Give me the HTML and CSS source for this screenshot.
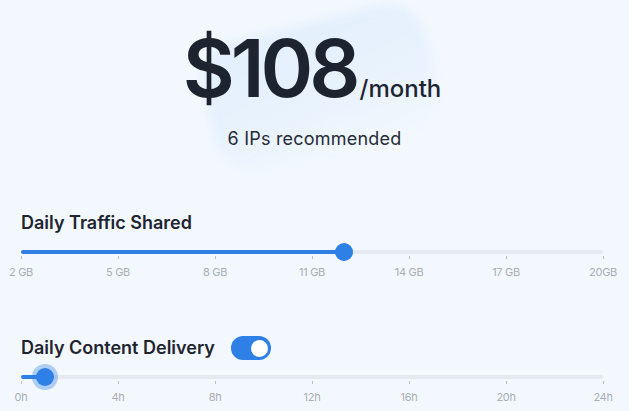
FILE: index.html
```html
<!DOCTYPE html>
<html lang="en">
<head>
<meta charset="utf-8">
<title>Pricing</title>
<link rel="stylesheet" href="styles.css">
</head>
<body>
<main class="page">
  <section class="price">
    <div class="blob" aria-hidden="true"></div>
    <div class="price-line">
      <span class="amount">$108</span><span class="period">/month</span>
    </div>
    <p class="subtitle">6 IPs recommended</p>
  </section>

  <section class="control traffic">
    <div class="control-head">
      <h2 class="control-title">Daily Traffic Shared</h2>
    </div>
    <div class="slider">
      <div class="fill" style="width: 55.56%"></div>
      <div class="thumb" style="left: 55.56%"></div>
    </div>
    <div class="scale">
      <div class="mark"><span class="tick"></span><span class="label">2 GB</span></div>
      <div class="mark"><span class="tick"></span><span class="label">5 GB</span></div>
      <div class="mark"><span class="tick"></span><span class="label">8 GB</span></div>
      <div class="mark"><span class="tick"></span><span class="label">11 GB</span></div>
      <div class="mark"><span class="tick"></span><span class="label">14 GB</span></div>
      <div class="mark"><span class="tick"></span><span class="label">17 GB</span></div>
      <div class="mark"><span class="tick"></span><span class="label">20GB</span></div>
    </div>
  </section>

  <section class="control delivery">
    <div class="control-head">
      <h2 class="control-title">Daily Content Delivery</h2>
      <span class="toggle on" role="switch" aria-checked="true"><span class="knob"></span></span>
    </div>
    <div class="slider">
      <div class="fill" style="width: 4.17%"></div>
      <div class="thumb halo" style="left: 4.17%"></div>
    </div>
    <div class="scale">
      <div class="mark"><span class="tick"></span><span class="label">0h</span></div>
      <div class="mark"><span class="tick"></span><span class="label">4h</span></div>
      <div class="mark"><span class="tick"></span><span class="label">8h</span></div>
      <div class="mark"><span class="tick"></span><span class="label">12h</span></div>
      <div class="mark"><span class="tick"></span><span class="label">16h</span></div>
      <div class="mark"><span class="tick"></span><span class="label">20h</span></div>
      <div class="mark"><span class="tick"></span><span class="label">24h</span></div>
    </div>
  </section>
</main>
</body>
</html>
```

FILE: styles.css
```css
* { box-sizing: border-box; }

html, body {
  margin: 0;
  padding: 0;
  background: #f2f8fe;
  font-family: Inter, "Noto Sans", "Liberation Sans", sans-serif;
  color: #1f2431;
}

.page {
  width: 629px;
  height: 411px;
  overflow: hidden;
  display: flex;
  flex-direction: column;
}

/* Price */
.price {
  position: relative;
  display: flex;
  flex-direction: column;
  align-items: center;
  padding-top: 28px;
}

.blob {
  position: absolute;
  left: 205px;
  top: 22px;
  width: 230px;
  height: 130px;
  border-radius: 40px;
  background: linear-gradient(170deg, #e3effd 0%, #e8f2fd 55%, rgba(236, 244, 254, 0) 100%);
  transform: rotate(-14deg);
  filter: blur(5px);
  z-index: 0;
}

.price-line {
  position: relative;
  z-index: 1;
  display: flex;
  align-items: baseline;
  gap: 3px;
  margin-right: 5px;
}

.amount {
  font-size: 80px;
  line-height: 80px;
  font-weight: 600;
  letter-spacing: -4px;
  color: #1e2330;
}

.period {
  font-size: 24px;
  font-weight: 500;
  color: #1e2330;
}

.subtitle {
  position: relative;
  z-index: 1;
  margin: 20px 0 0;
  font-size: 18px;
  line-height: 22px;
  font-weight: 400;
  letter-spacing: 0.2px;
  color: #262b37;
}

/* Controls */
.control {
  padding: 0 26px 0 21px;
}

.traffic { margin-top: 61px; }
.delivery { margin-top: 57px; }

.control-head {
  display: flex;
  align-items: center;
  gap: 16px;
  min-height: 24px;
}

.control-title {
  margin: 0;
  font-size: 18px;
  line-height: 22px;
  font-weight: 600;
  color: #1f2431;
}

.traffic .control-head { margin-bottom: 15px; }
.delivery .control-head { margin-bottom: 15px; }

.toggle {
  display: flex;
  align-items: center;
  justify-content: flex-end;
  width: 40px;
  height: 24px;
  padding: 0 3px;
  border-radius: 12px;
  background: #2e7fe6;
}

.knob {
  width: 17px;
  height: 17px;
  border-radius: 50%;
  background: #ffffff;
}

.slider {
  position: relative;
  height: 4px;
  border-radius: 2px;
  background: #e5eaf1;
}

.fill {
  height: 4px;
  border-radius: 2px;
  background: #2e7fe6;
}

.thumb {
  position: absolute;
  top: 50%;
  width: 18px;
  height: 18px;
  border-radius: 50%;
  background: #2e7fe6;
  transform: translate(-50%, -50%);
}

.thumb.halo {
  box-shadow: 0 0 0 4px rgba(46, 127, 230, 0.35);
}

.scale {
  display: flex;
  justify-content: space-between;
  margin-top: 2px;
}

.mark {
  width: 0;
  display: flex;
  flex-direction: column;
  align-items: center;
}

.tick {
  width: 1px;
  height: 3px;
  background: #b9bec6;
}

.label {
  margin-top: 7px;
  font-size: 11px;
  line-height: 13px;
  white-space: nowrap;
  color: #a9aeb7;
  letter-spacing: -0.3px;
}
```
